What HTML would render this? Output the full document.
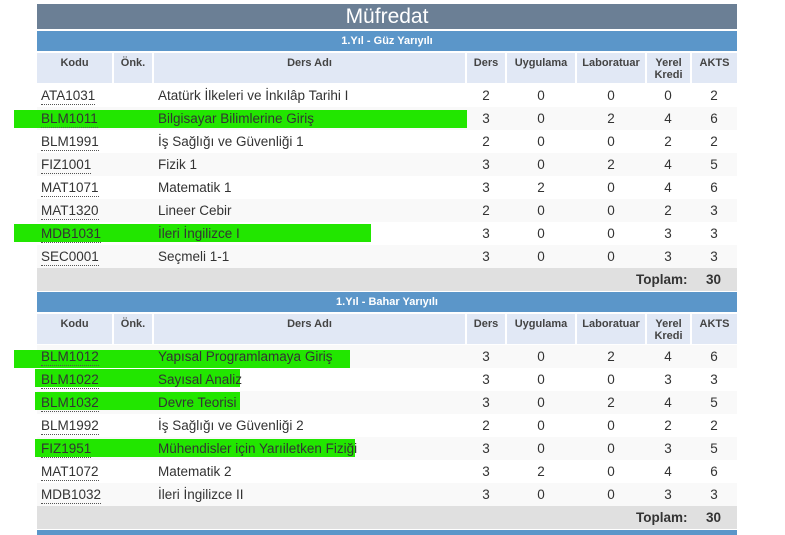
<!DOCTYPE html><html><head><meta charset="utf-8"><style>
*{margin:0;padding:0;box-sizing:border-box}
body{width:785px;height:535px;background:#fff;position:relative;overflow:hidden;font-family:"Liberation Sans",Arial,sans-serif;color:#333}
.a{position:absolute}
.title{left:37px;top:4px;width:700px;height:25px;background:#6b7f95;color:#fff;font-size:21px;text-align:center;line-height:25px}
.sec{left:37px;width:700px;height:20px;background:#5b96c9;color:#fff;font-weight:bold;font-size:11px;text-align:center;line-height:20px}
.h{background:#e1e8f5;height:30px;font-size:11px;font-weight:bold;color:#444;text-align:center;padding-top:4px;line-height:12px}
.r{position:absolute;left:0;width:785px;height:23px}
.alt{background:#f9f9f9}
.g{background:#22e600}
.t{position:absolute;font-size:13.5px;line-height:23px;color:#333;white-space:nowrap;top:0}
.c{border-bottom:1px dotted #555;line-height:17px;top:3px}
.n{text-align:center;width:30px}
.tot{left:37px;width:700px;height:23px;background:#e0e0e0;font-weight:bold;font-size:13px}
.tot .t{font-weight:bold}
</style></head><body>
<div class="a title">Müfredat</div>

<div class="a sec" style="top:31px">1.Yıl - Güz Yarıyılı</div>
<div class="a h" style="left:37px;top:53px;width:75px">Kodu</div>
<div class="a h" style="left:114px;top:53px;width:38px">Önk.</div>
<div class="a h" style="left:154px;top:53px;width:311px">Ders Adı</div>
<div class="a h" style="left:467px;top:53px;width:38px">Ders</div>
<div class="a h" style="left:507px;top:53px;width:68px">Uygulama</div>
<div class="a h" style="left:577px;top:53px;width:68px">Laboratuar</div>
<div class="a h" style="left:647px;top:53px;width:43px">Yerel<br>Kredi</div>
<div class="a h" style="left:692px;top:53px;width:45px">AKTS</div>

<div class="a alt" style="left:37px;top:107px;width:700px;height:23px"></div>
<div class="a alt" style="left:37px;top:153px;width:700px;height:23px"></div>
<div class="a alt" style="left:37px;top:199px;width:700px;height:23px"></div>
<div class="a alt" style="left:37px;top:245px;width:700px;height:23px"></div>
<div class="a g" style="left:14px;top:110px;width:453px;height:18px"></div>
<div class="a g" style="left:14px;top:224px;width:357px;height:18px"></div>

<div class="a tot" style="top:268px"><span class="t" style="left:599px">Toplam:</span><span class="t" style="left:669px">30</span></div>

<div class="a sec" style="top:292px">1.Yıl - Bahar Yarıyılı</div>
<div class="a h" style="left:37px;top:314px;width:75px">Kodu</div>
<div class="a h" style="left:114px;top:314px;width:38px">Önk.</div>
<div class="a h" style="left:154px;top:314px;width:311px">Ders Adı</div>
<div class="a h" style="left:467px;top:314px;width:38px">Ders</div>
<div class="a h" style="left:507px;top:314px;width:68px">Uygulama</div>
<div class="a h" style="left:577px;top:314px;width:68px">Laboratuar</div>
<div class="a h" style="left:647px;top:314px;width:43px">Yerel<br>Kredi</div>
<div class="a h" style="left:692px;top:314px;width:45px">AKTS</div>

<div class="a alt" style="left:37px;top:345px;width:700px;height:23px"></div>
<div class="a alt" style="left:37px;top:391px;width:700px;height:23px"></div>
<div class="a alt" style="left:37px;top:437px;width:700px;height:23px"></div>
<div class="a alt" style="left:37px;top:483px;width:700px;height:23px"></div>
<div class="a g" style="left:14px;top:350px;width:336px;height:18px"></div>
<div class="a g" style="left:35px;top:369px;width:205px;height:18px"></div>
<div class="a g" style="left:35px;top:392px;width:205px;height:18px"></div>
<div class="a g" style="left:35px;top:439px;width:320px;height:18px"></div>

<div class="a tot" style="top:506px"><span class="t" style="left:599px">Toplam:</span><span class="t" style="left:669px">30</span></div>
<div class="a" style="left:37px;top:530px;width:700px;height:5px;background:#5b96c9"></div>

<div class="a" style="left:0;top:84px;width:785px">
<div class="r" style="top:0"><span class="t c" style="left:41px">ATA1031</span><span class="t" style="left:158px">Atatürk İlkeleri ve İnkılâp Tarihi I</span><span class="t n" style="left:471px">2</span><span class="t n" style="left:526px">0</span><span class="t n" style="left:596px">0</span><span class="t n" style="left:653px">0</span><span class="t n" style="left:699px">2</span></div>
<div class="r" style="top:23px"><span class="t c" style="left:41px">BLM1011</span><span class="t" style="left:158px">Bilgisayar Bilimlerine Giriş</span><span class="t n" style="left:471px">3</span><span class="t n" style="left:526px">0</span><span class="t n" style="left:596px">2</span><span class="t n" style="left:653px">4</span><span class="t n" style="left:699px">6</span></div>
<div class="r" style="top:46px"><span class="t c" style="left:41px">BLM1991</span><span class="t" style="left:158px">İş Sağlığı ve Güvenliği 1</span><span class="t n" style="left:471px">2</span><span class="t n" style="left:526px">0</span><span class="t n" style="left:596px">0</span><span class="t n" style="left:653px">2</span><span class="t n" style="left:699px">2</span></div>
<div class="r" style="top:69px"><span class="t c" style="left:41px">FIZ1001</span><span class="t" style="left:158px">Fizik 1</span><span class="t n" style="left:471px">3</span><span class="t n" style="left:526px">0</span><span class="t n" style="left:596px">2</span><span class="t n" style="left:653px">4</span><span class="t n" style="left:699px">5</span></div>
<div class="r" style="top:92px"><span class="t c" style="left:41px">MAT1071</span><span class="t" style="left:158px">Matematik 1</span><span class="t n" style="left:471px">3</span><span class="t n" style="left:526px">2</span><span class="t n" style="left:596px">0</span><span class="t n" style="left:653px">4</span><span class="t n" style="left:699px">6</span></div>
<div class="r" style="top:115px"><span class="t c" style="left:41px">MAT1320</span><span class="t" style="left:158px">Lineer Cebir</span><span class="t n" style="left:471px">2</span><span class="t n" style="left:526px">0</span><span class="t n" style="left:596px">0</span><span class="t n" style="left:653px">2</span><span class="t n" style="left:699px">3</span></div>
<div class="r" style="top:138px"><span class="t c" style="left:41px">MDB1031</span><span class="t" style="left:158px">İleri İngilizce I</span><span class="t n" style="left:471px">3</span><span class="t n" style="left:526px">0</span><span class="t n" style="left:596px">0</span><span class="t n" style="left:653px">3</span><span class="t n" style="left:699px">3</span></div>
<div class="r" style="top:161px"><span class="t c" style="left:41px">SEC0001</span><span class="t" style="left:158px">Seçmeli 1-1</span><span class="t n" style="left:471px">3</span><span class="t n" style="left:526px">0</span><span class="t n" style="left:596px">0</span><span class="t n" style="left:653px">3</span><span class="t n" style="left:699px">3</span></div>
</div>

<div class="a" style="left:0;top:345px;width:785px">
<div class="r" style="top:0"><span class="t c" style="left:41px">BLM1012</span><span class="t" style="left:158px">Yapısal Programlamaya Giriş</span><span class="t n" style="left:471px">3</span><span class="t n" style="left:526px">0</span><span class="t n" style="left:596px">2</span><span class="t n" style="left:653px">4</span><span class="t n" style="left:699px">6</span></div>
<div class="r" style="top:23px"><span class="t c" style="left:41px">BLM1022</span><span class="t" style="left:158px">Sayısal Analiz</span><span class="t n" style="left:471px">3</span><span class="t n" style="left:526px">0</span><span class="t n" style="left:596px">0</span><span class="t n" style="left:653px">3</span><span class="t n" style="left:699px">3</span></div>
<div class="r" style="top:46px"><span class="t c" style="left:41px">BLM1032</span><span class="t" style="left:158px">Devre Teorisi</span><span class="t n" style="left:471px">3</span><span class="t n" style="left:526px">0</span><span class="t n" style="left:596px">2</span><span class="t n" style="left:653px">4</span><span class="t n" style="left:699px">5</span></div>
<div class="r" style="top:69px"><span class="t c" style="left:41px">BLM1992</span><span class="t" style="left:158px">İş Sağlığı ve Güvenliği 2</span><span class="t n" style="left:471px">2</span><span class="t n" style="left:526px">0</span><span class="t n" style="left:596px">0</span><span class="t n" style="left:653px">2</span><span class="t n" style="left:699px">2</span></div>
<div class="r" style="top:92px"><span class="t c" style="left:41px">FIZ1951</span><span class="t" style="left:158px">Mühendisler için Yarıiletken Fiziği</span><span class="t n" style="left:471px">3</span><span class="t n" style="left:526px">0</span><span class="t n" style="left:596px">0</span><span class="t n" style="left:653px">3</span><span class="t n" style="left:699px">5</span></div>
<div class="r" style="top:115px"><span class="t c" style="left:41px">MAT1072</span><span class="t" style="left:158px">Matematik 2</span><span class="t n" style="left:471px">3</span><span class="t n" style="left:526px">2</span><span class="t n" style="left:596px">0</span><span class="t n" style="left:653px">4</span><span class="t n" style="left:699px">6</span></div>
<div class="r" style="top:138px"><span class="t c" style="left:41px">MDB1032</span><span class="t" style="left:158px">İleri İngilizce II</span><span class="t n" style="left:471px">3</span><span class="t n" style="left:526px">0</span><span class="t n" style="left:596px">0</span><span class="t n" style="left:653px">3</span><span class="t n" style="left:699px">3</span></div>
</div>
</body></html>
